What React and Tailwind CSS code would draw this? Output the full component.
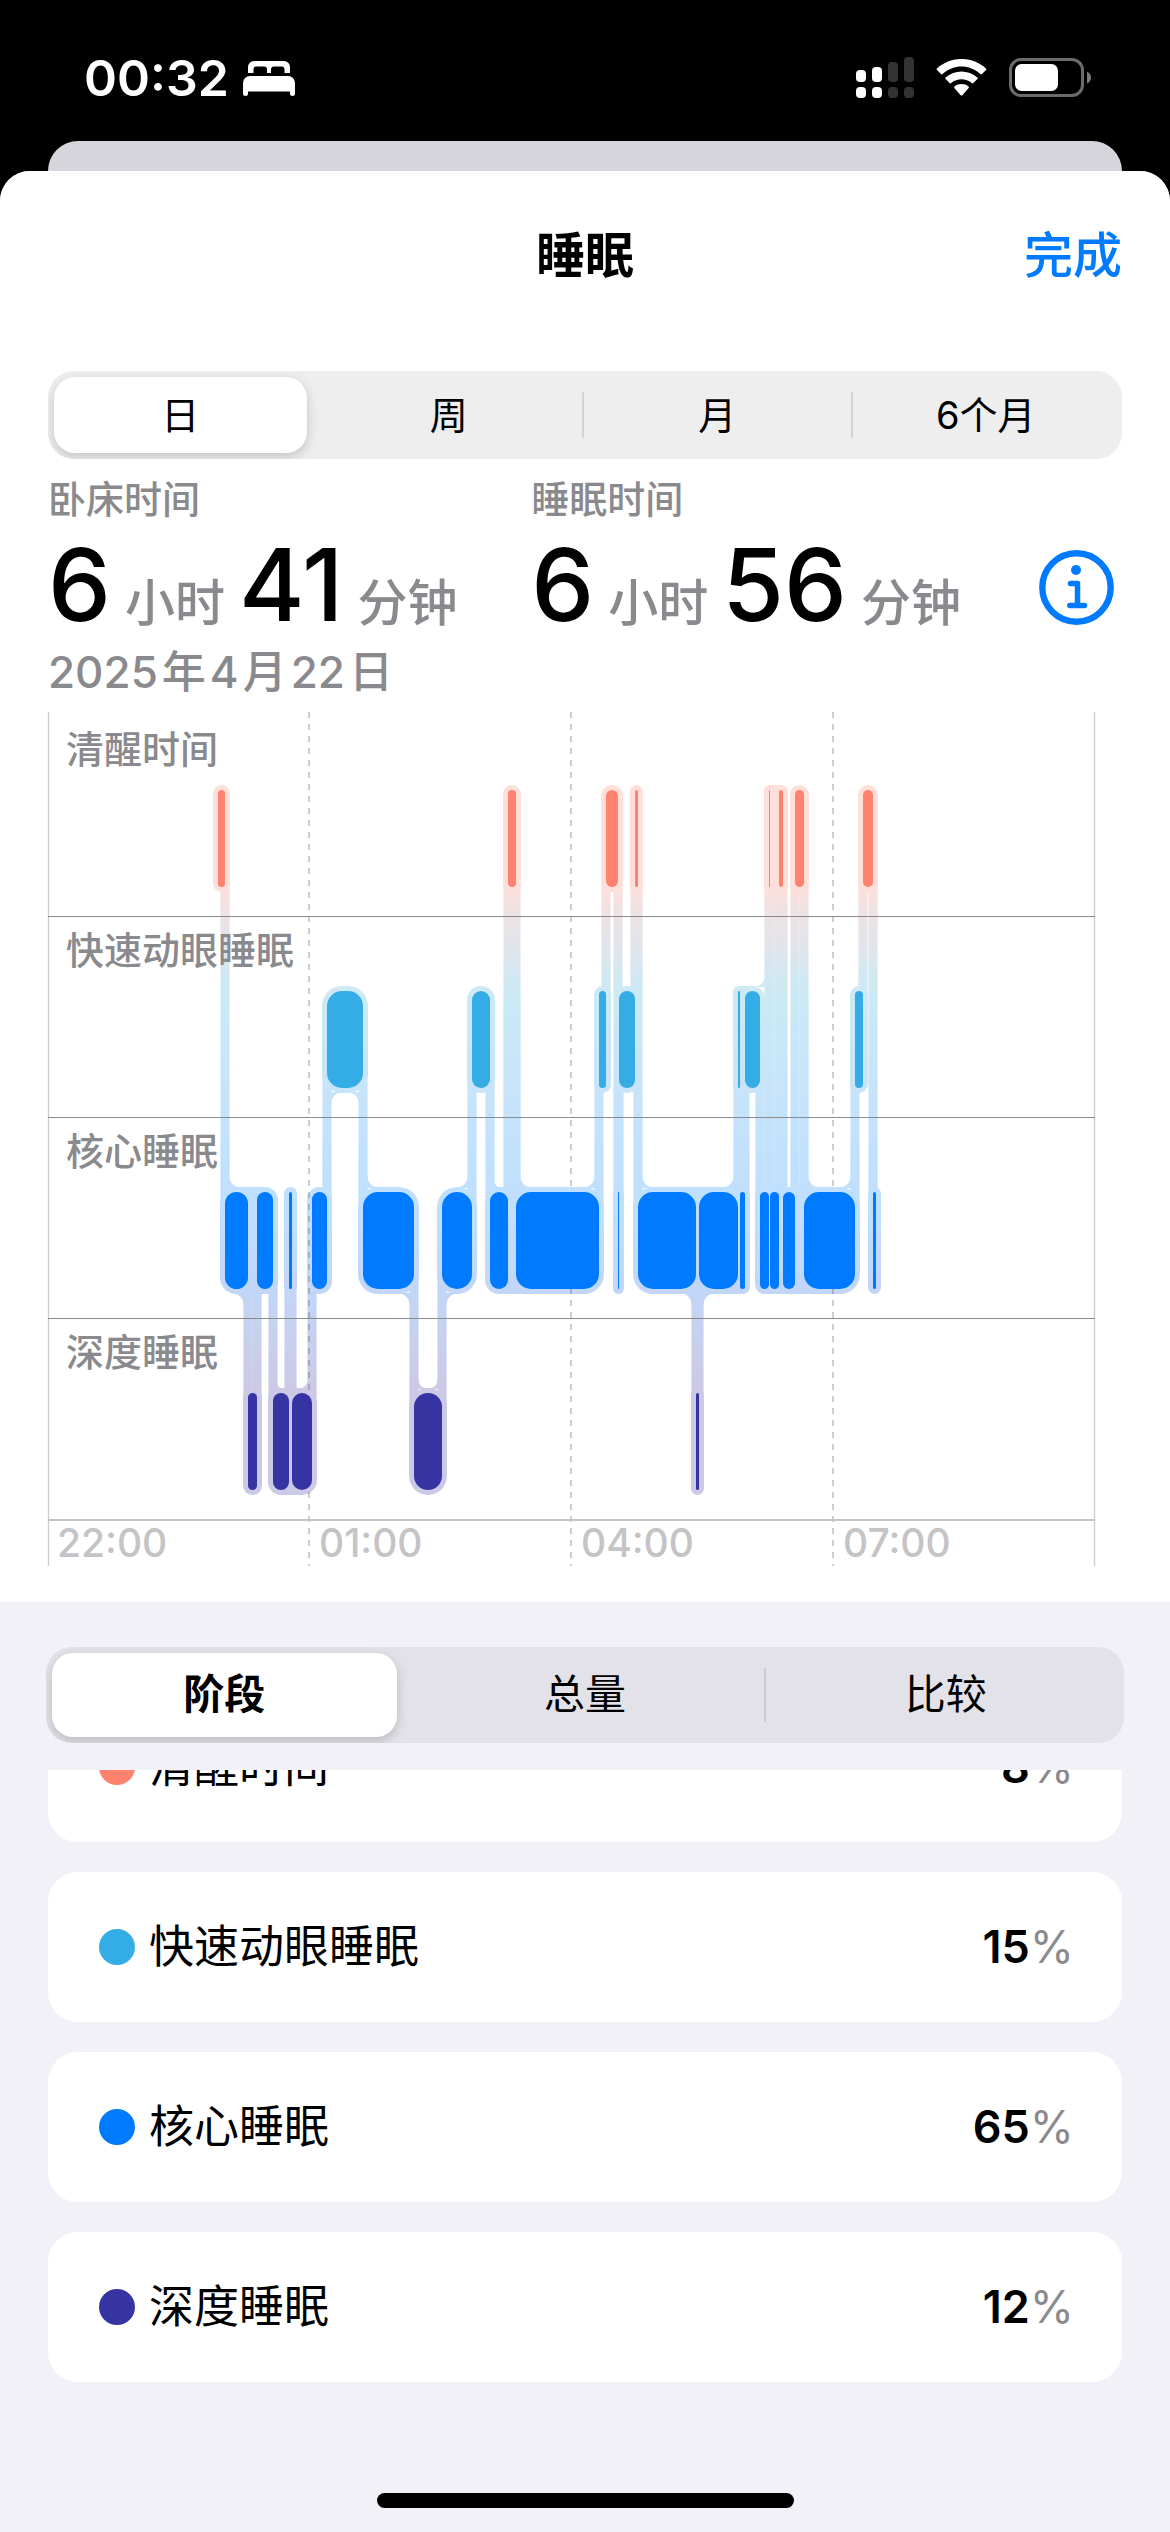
import { useState } from 'react';
import clsx from 'clsx';

const STAGES = [
  { id: 'awake', label: '清醒时间', percent: 8, fill: 'fill-[#ff826e]', dot: 'bg-[#ff826e]' },
  { id: 'rem', label: '快速动眼睡眠', percent: 15, fill: 'fill-[#34ade6]', dot: 'bg-[#34ade6]' },
  { id: 'core', label: '核心睡眠', percent: 65, fill: 'fill-[#007aff]', dot: 'bg-[#007aff]' },
  { id: 'deep', label: '深度睡眠', percent: 12, fill: 'fill-[#3634a3]', dot: 'bg-[#3634a3]' },
];

// [stage index, start, end] in chart units, in time order
const NIGHT = [
  [0, 170, 177], [2, 177, 200], [3, 200, 209], [2, 209, 225], [3, 225, 241],
  [2, 241, 244], [3, 244, 264], [2, 264, 279], [1, 279, 315], [2, 315, 366],
  [3, 366, 394], [2, 394, 424], [1, 424, 442], [2, 442, 460], [0, 460, 468],
  [2, 468, 551], [1, 551, 558], [0, 558, 570], [2, 570, 571], [1, 571, 587],
  [0, 587, 590], [2, 590, 648], [3, 648, 651], [2, 651, 690], [1, 690, 692],
  [2, 692, 697], [1, 697, 712], [2, 712, 721], [0, 721, 722], [2, 722, 731],
  [0, 731, 735], [2, 735, 747], [0, 747, 756], [2, 756, 807], [1, 807, 815],
  [0, 815, 825], [2, 825, 828],
];

// rounded inner corners between a connector and a block: [x, y, dirX, dirY, radius]
const FILLETS = [
  [181, 476, 1, -1, 15], [319, 476, 1, -1, 15], [420, 476, -1, -1, 15], [446, 476, 1, -1, 9],
  [472, 476, 1, -1, 15], [547, 476, -1, -1, 15], [594, 476, 1, -1, 15], [686, 476, -1, -1, 15],
  [760, 476, 1, -1, 15], [803, 476, -1, -1, 15], [717, 275, -1, -1, 13],
  [196, 581, -1, 1, 15], [362, 581, -1, 1, 15], [398, 581, 1, 1, 15],
  [644, 581, -1, 1, 15], [655, 581, 1, 1, 15],
  [283, 380, 1, 1, 14], [311, 380, -1, 1, 14],
  [229, 677, 1, -1, 8], [260, 677, -1, -1, 12], [370, 677, 1, -1, 12], [390, 677, -1, -1, 12],
];

const HALO_STOPS = [
  [0.228, '#ffdfda'], [0.268, '#ebe2e5'], [0.315, '#dfe5ec'], [0.343, '#d2e8f2'],
  [0.38, '#caeaf6'], [0.492, '#c7e4fa'], [0.576, '#c2e1fd'], [0.654, '#bfdffd'],
  [0.755, '#c2d6f8'], [0.8, '#c6d2f1'], [0.885, '#ccc9e6'],
];

const ROW = 201;
const BAR_TOP = 78;
const BAR_HEIGHT = 97;
const HALO = 5;

const barTop = (stage) => BAR_TOP + ROW * stage;
const barRadius = (start, end) => Math.min((end - start) / 2, 15);

// same-stage bars that are close enough to share one outline
const bridges = STAGES.flatMap((_, stage) => {
  const bars = NIGHT.filter(([s]) => s === stage);
  return bars.slice(1).flatMap((bar, i) => {
    const prev = bars[i];
    if (bar[1] - prev[2] > 10) return [];
    return [{ stage, x: (prev[1] + prev[2]) / 2, end: (bar[1] + bar[2]) / 2 }];
  });
});

const SleepChart = () => (
  <svg viewBox="0 0 1074 856" className="block w-full h-auto overflow-visible" role="img" aria-label="睡眠">
    <defs>
      <linearGradient id="halo" gradientUnits="userSpaceOnUse" x1="0" y1="0" x2="0" y2="764">
        {HALO_STOPS.map(([offset, color]) => (
          <stop key={offset} offset={offset} stopColor={color} />
        ))}
      </linearGradient>
    </defs>

    <g fill="url(#halo)">
      {NIGHT.map(([stage, start, end]) => (
        <rect
          key={start}
          x={start - HALO}
          y={barTop(stage) - HALO}
          width={end - start + HALO * 2}
          height={BAR_HEIGHT + HALO * 2}
          rx={barRadius(start, end) + HALO}
        />
      ))}
      {bridges.map(({ stage, x, end }) => (
        <rect key={x} x={x} y={barTop(stage) - HALO} width={end - x} height={BAR_HEIGHT + HALO * 2} />
      ))}
      {NIGHT.slice(1).map(([stage, start], i) => {
        const upper = Math.min(stage, NIGHT[i][0]);
        const lower = Math.max(stage, NIGHT[i][0]);
        return (
          <rect
            key={start}
            x={start - 4.6}
            y={barTop(upper) + BAR_HEIGHT / 2}
            width={9.2}
            height={(lower - upper) * ROW}
          />
        );
      })}
      {FILLETS.map(([x, y, dx, dy, r]) => (
        <path key={`${x}-${y}`} d={`M${x} ${y}h${dx * r}Q${x} ${y} ${x} ${y + dy * r}z`} />
      ))}
    </g>

    <g className="stroke-[#3c3c43]/25" fill="none">
      <path d="M0.5 0V854M1046.5 0V854" strokeWidth="1.4" />
      <path d="M261 0V854M523 0V854M785 0V854" strokeWidth="2" strokeDasharray="6 6" />
    </g>
    <path d="M0 204.5H1047M0 405.5H1047M0 606.5H1047" className="stroke-[#8a8a8e]" strokeWidth="1.2" />
    <path d="M0 808H1047" className="stroke-[#c4c4c6]" strokeWidth="2" />

    <g className="fill-[#8a8a8e] font-medium" fontSize="38">
      {STAGES.map((stage, i) => (
        <text key={stage.id} x="18" y={51 + ROW * i}>{stage.label}</text>
      ))}
    </g>
    <g className="fill-[#c4c4c6] font-medium" fontSize="39">
      {['22:00', '01:00', '04:00', '07:00'].map((time, i) => (
        <text key={time} x={9 + 262 * i} y="845">{time}</text>
      ))}
    </g>

    {NIGHT.map(([stage, start, end]) => (
      <rect
        key={start}
        x={start}
        y={barTop(stage)}
        width={end - start}
        height={BAR_HEIGHT}
        rx={barRadius(start, end)}
        className={STAGES[stage].fill}
      />
    ))}
  </svg>
);

const Segmented = ({ options, value, onChange, className, itemClassName, activeClassName }) => {
  const active = options.indexOf(value);
  return (
    <div className={clsx('flex gap-4 overflow-hidden rounded-[26px] p-1.5', className)}>
      {options.map((option, i) => (
        <button
          key={option}
          type="button"
          aria-pressed={i === active}
          onClick={() => onChange(option)}
          className={clsx(
            'relative flex-1 basis-0 rounded-[21px] text-black',
            itemClassName,
            i === active && 'bg-white shadow-[0_4px_12px_rgba(0,0,0,0.18)]',
            i === active && activeClassName
          )}
        >
          {i > 0 && i !== active && i - 1 !== active && (
            <span className="absolute inset-y-[15px] -left-[9px] w-0.5 rounded-full bg-[#3c3c43]/15" />
          )}
          {option}
        </button>
      ))}
    </div>
  );
};

const Duration = ({ label, hours, minutes }) => (
  <div>
    <p className="text-[38px] leading-10 font-medium text-[#8a8a8e]">{label}</p>
    <p className="mt-4 flex items-baseline gap-3.5 text-[50px] leading-none font-medium text-[#8a8a8e]">
      <span className="text-[100px] text-black">{hours}</span>
      小时
      <span className="text-[100px] text-black">{minutes}</span>
      分钟
    </p>
  </div>
);

const StatusBar = () => (
  <div className="flex h-[141px] items-start justify-between pt-[53px] pr-[78px] pl-[84px] text-white">
    <div className="flex items-center gap-3.5">
      <span className="text-[50px] leading-[50px] font-semibold">00:32</span>
      <svg viewBox="0 0 52 35" className="w-[52px]" fill="currentColor">
        <path d="M5 12V6a6 6 0 0 1 6-6h30a6 6 0 0 1 6 6v6h-5.500V8.500a3 3 0 0 0-3-3h-7.500a3 3 0 0 0-3 3V12h-4V8.500a3 3 0 0 0-3-3h-7.500a3 3 0 0 0-3 3V12z" />
        <path d="M0 22a7 7 0 0 1 7-7h38a7 7 0 0 1 7 7v11q0 2-2.500 2T47 33v-2.500H5V33q0 2-2.500 2T0 33z" />
      </svg>
    </div>
    <div className="flex items-center pt-1">
      <svg viewBox="0 0 58 41" className="w-[58px]" fill="currentColor">
        <rect y="13" width="10" height="12" rx="4" />
        <rect x="16" y="10" width="10" height="15" rx="4" />
        <rect y="30" width="10" height="11" rx="4" />
        <rect x="16" y="30" width="10" height="11" rx="4" />
        <g opacity="0.2">
          <rect x="32" y="5" width="10" height="20" rx="4" />
          <rect x="48" width="10" height="25" rx="4" />
          <rect x="32" y="30" width="10" height="11" rx="4" />
          <rect x="48" y="30" width="10" height="11" rx="4" />
        </g>
      </svg>
      <svg viewBox="0 0 51 37" className="ml-[22px] w-[51px]" fill="currentColor">
        <path d="M1 9.500C15-3.200 36-3.200 50 9.500q.8.800 0 1.600l-4 4q-.8.800-1.600 0C33.500 5 17.500 5 6.600 15.100q-.8.800-1.600 0l-4-4q-.8-.8 0-1.600z" />
        <path d="M9.600 18.500c9-8 22.800-8 31.800 0q.8.800 0 1.600l-4 4q-.8.800-1.600 0c-6-5-14.600-5-20.600 0q-.8.800-1.600 0l-4-4q-.8-.8 0-1.600z" />
        <path d="M18.500 27.500c4.200-3.200 9.800-3.200 14 0q1 .8 0 1.800l-6.200 6.900q-.8.800-1.600 0l-6.200-6.900q-1-1 0-1.800z" />
      </svg>
      <svg viewBox="0 0 83 39" className="ml-[22px] w-[83px]">
        <rect x="1.500" y="1.500" width="72" height="36" rx="10.500" fill="none" stroke="#6b6b6b" strokeWidth="3" />
        <rect x="6" y="6" width="43" height="27" rx="6.500" fill="#fff" />
        <path d="M78 13.500q4 2 4 6t-4 6z" fill="#7a7a7a" />
      </svg>
    </div>
  </div>
);

export default function App() {
  const [range, setRange] = useState('日');
  const [view, setView] = useState('阶段');

  return (
    <div className="flex min-h-screen flex-col bg-black font-['Inter','Noto_Sans_CJK_SC',sans-serif] text-black">
      <StatusBar />
      <div className="mx-12 h-[30px] rounded-t-[30px] bg-[#d6d5db]" />

      <div className="flex flex-1 flex-col overflow-hidden rounded-t-[30px] bg-[#f2f1f7]">
        <section className="bg-white px-12 pb-[34px]">
          <header className="grid h-[168px] grid-cols-3 items-center pt-0.5 text-[49px]">
            <h1 className="col-start-2 text-center font-semibold">睡眠</h1>
            <button type="button" className="justify-self-end font-medium text-[#007aff]">完成</button>
          </header>

          <Segmented
            options={['日', '周', '月', '6个月']}
            value={range}
            onChange={setRange}
            className="mt-8 bg-[#eeeeee] pr-2.5"
            itemClassName="h-[76px] text-[38px]"
          />

          <div className="mt-5 grid grid-cols-[45%_1fr_auto]">
            <Duration label="卧床时间" hours={6} minutes={41} />
            <Duration label="睡眠时间" hours={6} minutes={56} />
            <button type="button" aria-label="信息" className="mr-2 mb-2.5 self-end text-[#007aff]">
              <svg viewBox="0 0 75 75" className="size-[75px]" fill="none" stroke="currentColor">
                <circle cx="37.500" cy="37.500" r="34.200" strokeWidth="6.400" />
                <circle cx="37" cy="20" r="5" fill="currentColor" stroke="none" />
                <path d="M31.500 33.500H38.500V55.500M30.800 55.500H45.500" strokeWidth="5.500" strokeLinecap="round" strokeLinejoin="round" />
              </svg>
            </button>
          </div>
          <p className="mt-[15px] mb-[18px] flex gap-1 text-[44px] leading-11 font-medium text-[#8a8a8e]">
            <span>2025</span>
            <span>年</span>
            <span>4</span>
            <span>月</span>
            <span>22</span>
            <span>日</span>
          </p>

          <SleepChart />
        </section>

        <section className="flex flex-1 flex-col px-12 pb-6">
          <Segmented
            options={['阶段', '总量', '比较']}
            value={view}
            onChange={setView}
            className="-mx-0.5 mt-[45px] bg-[#e3e2e8]"
            itemClassName="h-[84px] text-[41px]"
            activeClassName="font-bold"
          />

          <div className="mt-[27px] overflow-hidden">
            <ul className="-mt-[78px] flex flex-col gap-[30px]">
              {STAGES.map(stage => (
                <li key={stage.id} className="flex h-[150px] items-center rounded-[30px] bg-white pr-12 pl-[51px] text-[45px]">
                  <span className={clsx('mr-3.5 size-9 rounded-full', stage.dot)} />
                  <span>{stage.label}</span>
                  <span className="ml-auto font-semibold">
                    {stage.percent}<span className="font-normal text-[#8a8a8e]">%</span>
                  </span>
                </li>
              ))}
            </ul>
          </div>

          <div className="mx-auto mt-auto h-[15px] w-[417px] rounded-full bg-black" />
        </section>
      </div>
    </div>
  );
}
